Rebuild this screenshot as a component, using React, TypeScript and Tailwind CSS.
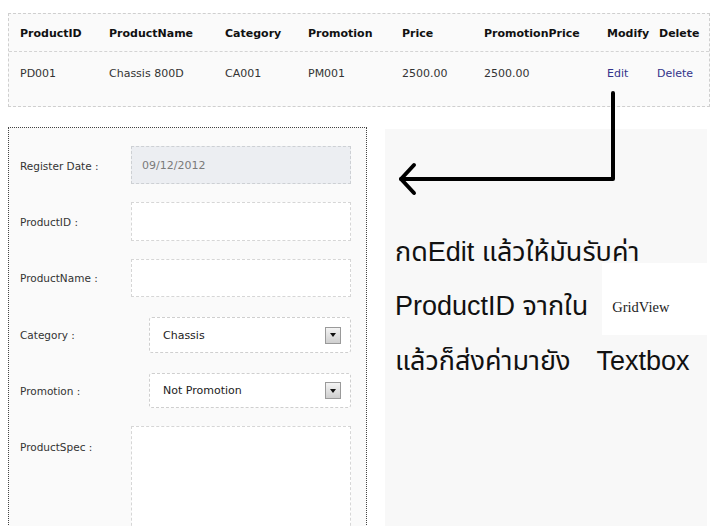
import React from "react";

const headers = ["ProductID", "ProductName", "Category", "Promotion", "Price", "PromotionPrice", "Modify", "Delete"];

function SelectArrow() {
  return (
    <div className="w-[16px] h-[17px] border border-[#9a9a9a] bg-gradient-to-b from-[#f4f4f4] to-[#cfcfcf] flex items-center justify-center">
      <div className="w-0 h-0 border-l-[3px] border-r-[3px] border-t-[4px] border-l-transparent border-r-transparent border-t-[#111]" />
    </div>
  );
}

export default function App() {
  const font = { fontFamily: '"DejaVu Sans", Verdana, sans-serif' };
  return (
    <div className="relative w-[717px] h-[526px] overflow-hidden bg-white" style={font}>
      {/* Grid table */}
      <div className="ml-[8px] mt-[13px] w-[702px] border border-dashed border-[#cfcfcf] bg-[#fafafa]">
        <div className="grid grid-cols-[89px_116px_83px_94px_82px_123px_52px_1fr] pl-[11px] pt-[3px] h-[38px] items-center border-b border-dashed border-[#d4d4d4] text-[11px] font-bold text-[#111]">
          {headers.map((h) => (
            <div key={h} className="whitespace-nowrap">{h}</div>
          ))}
        </div>
        <div className="grid grid-cols-[89px_116px_83px_94px_82px_123px_52px_1fr] pl-[11px] h-[54px] pt-[15px] text-[11px] leading-[14px] text-[#333]">
          <div>PD001</div>
          <div>Chassis 800D</div>
          <div>CA001</div>
          <div>PM001</div>
          <div>2500.00</div>
          <div>2500.00</div>
          <div className="text-[#33338a]">Edit</div>
          <div className="text-[#33338a] -ml-[2px]">Delete</div>
        </div>
      </div>

      <div className="flex mt-[20px]">
        {/* Form panel */}
        <div className="ml-[8px] w-[359px] h-[420px] border border-dotted border-[#444] bg-[#fafafa] pt-[18px] pr-[15px] text-[10.5px] text-[#333]">
          <div className="flex items-center h-[38px] pl-[11px]">
            <div className="w-[111px] pt-[3px]">Register Date :</div>
            <div className="flex-1 h-full border border-dashed border-[#cdd0d4] bg-[#eceef2] flex items-center pl-[10px] pt-[2px] text-[11px] text-[#7a7a7a]">09/12/2012</div>
          </div>
          <div className="flex items-center h-[39px] mt-[18px] pl-[11px]">
            <div className="w-[111px] pt-[2px]">ProductID :</div>
            <div className="flex-1 h-full border border-dashed border-[#d6d6d6] bg-white" />
          </div>
          <div className="flex items-center h-[38px] mt-[18px] pl-[11px]">
            <div className="w-[111px] pt-[2px]">ProductName :</div>
            <div className="flex-1 h-full border border-dashed border-[#d6d6d6] bg-white" />
          </div>
          <div className="flex items-center h-[36px] mt-[20px] pl-[11px]">
            <div className="w-[129px] pt-[2px]">Category :</div>
            <div className="flex-1 h-full border border-dashed border-[#cfcfcf] rounded-[3px] bg-white flex items-center pl-[13px] pr-[9px] text-[11px] text-[#222]">
              <span className="flex-1 pt-[2px]">Chassis</span>
              <SelectArrow />
            </div>
          </div>
          <div className="flex items-center h-[35px] mt-[20px] pl-[11px]">
            <div className="w-[129px] pt-[2px]">Promotion :</div>
            <div className="flex-1 h-full border border-dashed border-[#cfcfcf] rounded-[3px] bg-white flex items-center pl-[13px] pr-[9px] text-[11px] text-[#222]">
              <span className="flex-1 pt-[2px]">Not Promotion</span>
              <SelectArrow />
            </div>
          </div>
          <div className="flex h-[110px] mt-[18px] pl-[11px]">
            <div className="w-[111px] pt-[14px]">ProductSpec :</div>
            <div className="flex-1 h-full border border-dashed border-[#d6d6d6] bg-white" />
          </div>
        </div>

        {/* Note panel */}
        <div
          className="ml-[18px] mt-[2px] w-[322px] h-[420px] bg-[#f8f8f8] pt-[96px] pl-[10px] text-[27px] leading-[54px] text-[#111]"
          style={{ fontFamily: '"Liberation Sans", Arial, "Noto Sans Thai", "Noto Sans", sans-serif' }}
        >
          <div className="whitespace-nowrap">กดEdit แล้วให้มันรับค่า</div>
          <div className="flex items-center whitespace-nowrap h-[54px]">
            <span>ProductID จากใน</span>
            <span className="ml-[14px] mb-[14px] bg-white h-[72px] flex-1 flex items-center pl-[10px] pt-[16px]">
              <span className="text-[14.5px] leading-none text-[#222]" style={{ fontFamily: '"Liberation Serif", "Times New Roman", serif' }}>GridView</span>
            </span>
          </div>
          <div className="flex whitespace-nowrap mt-[1px]">
            <span>แล้วก็ส่งค่ามายัง</span>
            <span className="ml-[26px]">Textbox</span>
          </div>
        </div>
      </div>

      {/* Arrow overlay */}
      <svg className="absolute left-0 top-0 pointer-events-none" width={717} height={526}>
        <path d="M613 93 V179 H401" fill="none" stroke="#000" strokeWidth={4} strokeLinecap="round" strokeLinejoin="round" />
        <path d="M414 165 L401 179 L414 193" fill="none" stroke="#000" strokeWidth={4} strokeLinecap="round" strokeLinejoin="round" />
      </svg>
    </div>
  );
}
